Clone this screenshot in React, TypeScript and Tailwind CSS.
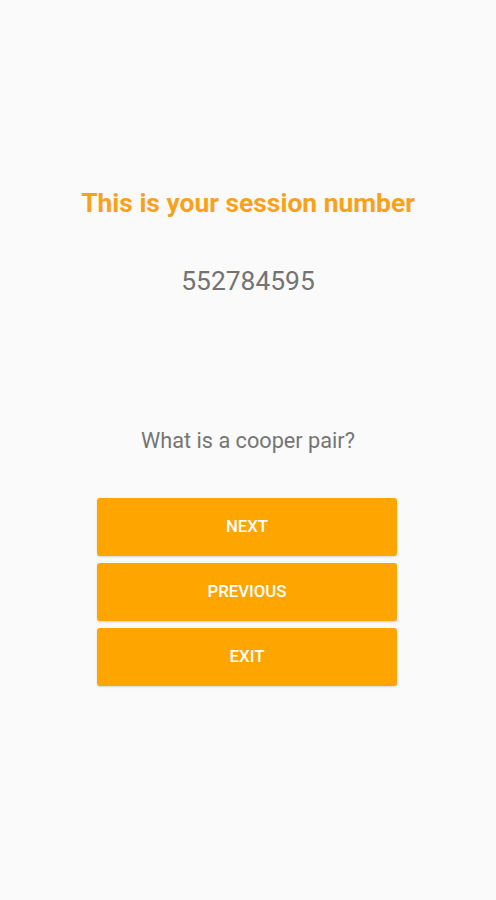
export default function App() {
  return (
    <div
      className="min-h-[900px] w-full bg-[#fafafa] flex flex-col items-center"
      style={{ fontFamily: "Roboto, 'Noto Sans', sans-serif" }}
    >
      <h1 className="mt-[187px] text-[26.4px] leading-[32px] font-bold text-[#f9a11b]">
        This is your session number
      </h1>
      <p className="mt-[46px] text-[26.4px] leading-[32px] text-[#737373]">552784595</p>
      <p className="mt-[130px] text-[21.7px] leading-[28px] text-[#757575]">What is a cooper pair?</p>
      <div className="mt-[43px] mr-[2px] w-[300px] flex flex-col gap-[7px]">
        {["NEXT", "PREVIOUS", "EXIT"].map((label) => (
          <button
            key={label}
            type="button"
            className="h-[58px] w-full rounded-[3px] bg-[#ffa500] text-[16.8px] font-medium text-white shadow-[0_1px_2px_rgba(0,0,0,0.15)]"
          >
            {label}
          </button>
        ))}
      </div>
    </div>
  );
}
